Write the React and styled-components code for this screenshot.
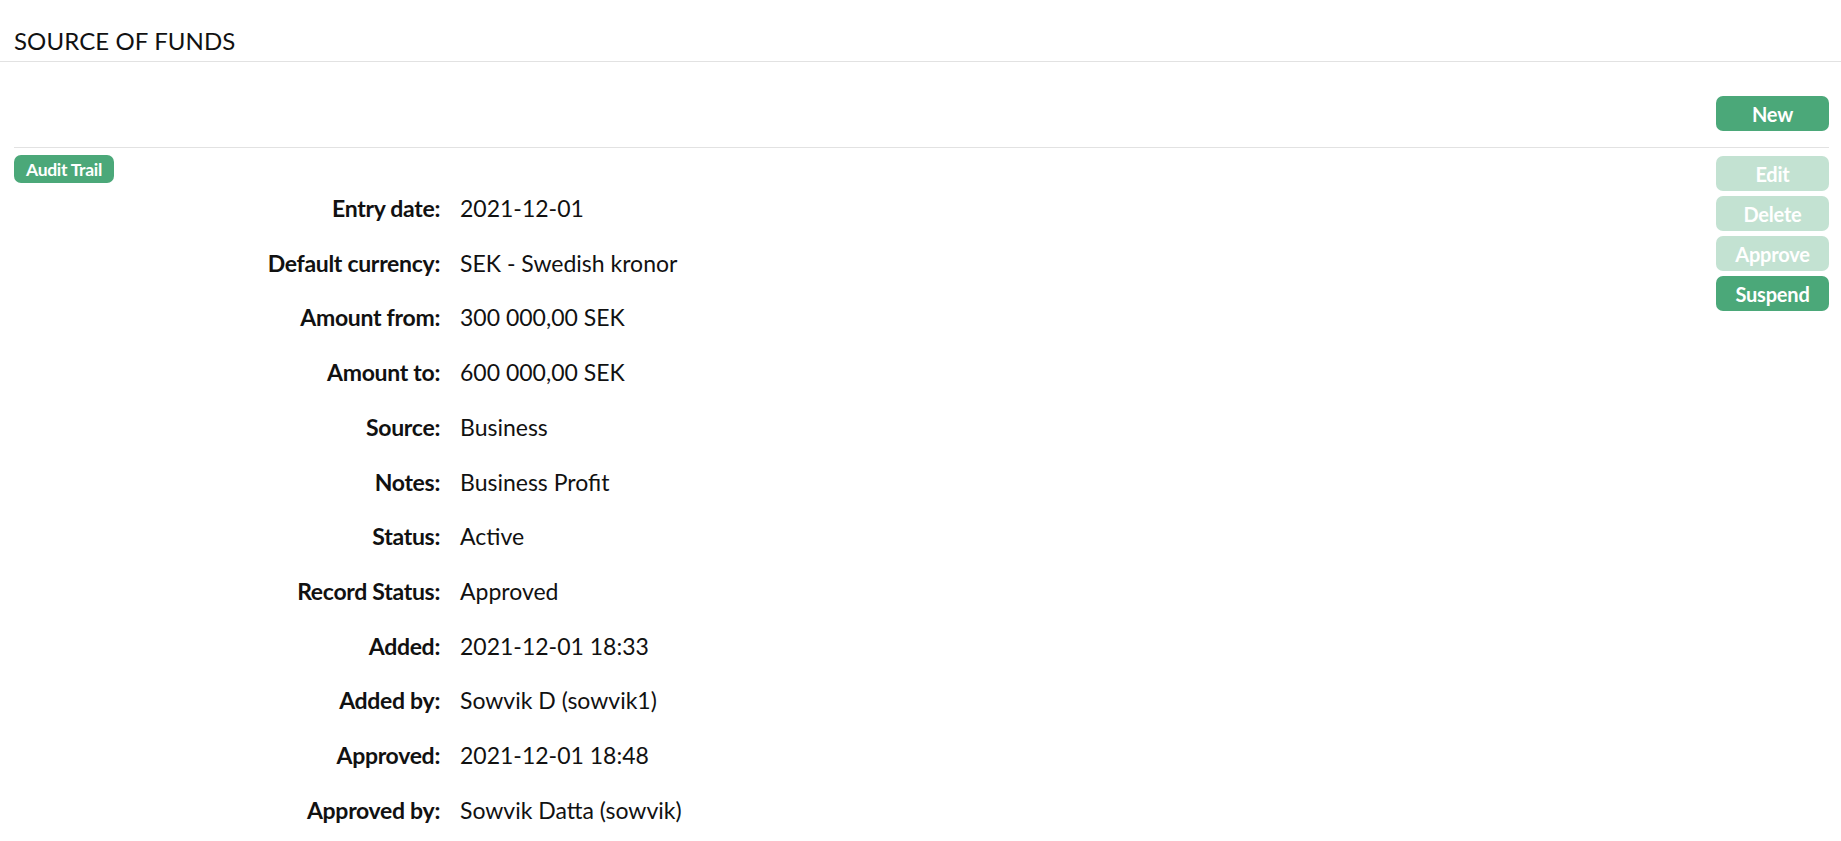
import React from "react";
import styled, { createGlobalStyle } from "styled-components";

const GlobalStyle = createGlobalStyle`
  body {
    margin: 0;
    background: #ffffff;
    color: #111111;
    font-family: "Lato", "Noto Sans", sans-serif;
  }
`;

const PageHeader = styled.header`
  height: 62px;
  box-sizing: border-box;
  padding: 25px 14px 0;
  border-bottom: 1px solid #e2e2e2;

  h1 {
    margin: 0;
    font-size: 24px;
    font-weight: 400;
    line-height: 32px;
    letter-spacing: 0.1px;
  }
`;

const Content = styled.main`
  padding: 0 12px 0 14px;
`;

const Toolbar = styled.div`
  display: flex;
  justify-content: flex-end;
  padding: 34px 0 16px;
  border-bottom: 1px solid #e2e2e2;
`;

const Body = styled.div`
  display: grid;
  grid-template-columns: 1fr 113px;
`;

const BadgeRow = styled.div`
  display: flex;
  padding-top: 7px;
`;

const ActionColumn = styled.div`
  display: flex;
  flex-direction: column;
  gap: 5px;
  padding-top: 8px;
`;

const Button = styled.button`
  width: 113px;
  height: 35px;
  border: none;
  border-radius: 7px;
  background: ${(p) => (p.$disabled ? "#c3e2d2" : "#4ba879")};
  color: #ffffff;
  font-family: inherit;
  font-size: 20px;
  font-weight: 700;
  letter-spacing: -0.2px;
  cursor: ${(p) => (p.$disabled ? "default" : "pointer")};
`;

const Badge = styled.button`
  height: 28px;
  padding: 0 12px;
  border: none;
  border-radius: 7px;
  background: #4ba879;
  color: #ffffff;
  font-family: inherit;
  font-size: 17.5px;
  font-weight: 700;
  letter-spacing: -0.3px;
`;

const Details = styled.dl`
  display: grid;
  grid-template-columns: 426px 1fr;
  column-gap: 20px;
  margin: -2px 0 0;
`;

const Label = styled.dt`
  text-align: right;
  font-weight: 700;
  font-size: 23px;
  line-height: 54.7px;
  letter-spacing: -0.3px;
`;

const Value = styled.dd`
  margin: 0;
  font-size: 23px;
  line-height: 54.7px;
`;

const rows = [
  ["Entry date", "2021-12-01"],
  ["Default currency", "SEK - Swedish kronor"],
  ["Amount from", "300 000,00 SEK"],
  ["Amount to", "600 000,00 SEK"],
  ["Source", "Business"],
  ["Notes", "Business Profit"],
  ["Status", "Active"],
  ["Record Status", "Approved"],
  ["Added", "2021-12-01 18:33"],
  ["Added by", "Sowvik D (sowvik1)"],
  ["Approved", "2021-12-01 18:48"],
  ["Approved by", "Sowvik Datta (sowvik)"],
];

export default function App() {
  return (
    <>
      <GlobalStyle />
      <PageHeader>
        <h1>SOURCE OF FUNDS</h1>
      </PageHeader>
      <Content>
        <Toolbar>
          <Button>New</Button>
        </Toolbar>
        <Body>
          <div>
            <BadgeRow>
              <Badge>Audit Trail</Badge>
            </BadgeRow>
            <Details>
              {rows.map(([label, value]) => (
                <React.Fragment key={label}>
                  <Label>{label}:</Label>
                  <Value>{value}</Value>
                </React.Fragment>
              ))}
            </Details>
          </div>
          <ActionColumn>
            <Button $disabled>Edit</Button>
            <Button $disabled>Delete</Button>
            <Button $disabled>Approve</Button>
            <Button>Suspend</Button>
          </ActionColumn>
        </Body>
      </Content>
    </>
  );
}
